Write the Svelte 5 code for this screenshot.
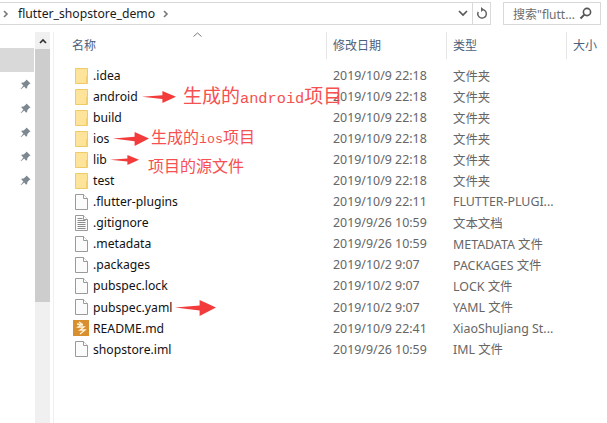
<script>
  const folder = 'folder';
  const rows = [
    { n: '.idea', d: '2019/10/9 22:18', t: '文件夹', i: 'folder' },
    { n: 'android', d: '2019/10/9 22:18', t: '文件夹', i: 'folder' },
    { n: 'build', d: '2019/10/9 22:18', t: '文件夹', i: 'folder' },
    { n: 'ios', d: '2019/10/9 22:18', t: '文件夹', i: 'folder' },
    { n: 'lib', d: '2019/10/9 22:18', t: '文件夹', i: 'folder' },
    { n: 'test', d: '2019/10/9 22:18', t: '文件夹', i: 'folder' },
    { n: '.flutter-plugins', d: '2019/10/9 22:11', t: 'FLUTTER-PLUGI...', i: 'file' },
    { n: '.gitignore', d: '2019/9/26 10:59', t: '文本文档', i: 'text' },
    { n: '.metadata', d: '2019/9/26 10:59', t: 'METADATA 文件', i: 'file' },
    { n: '.packages', d: '2019/10/2 9:07', t: 'PACKAGES 文件', i: 'file' },
    { n: 'pubspec.lock', d: '2019/10/2 9:07', t: 'LOCK 文件', i: 'file' },
    { n: 'pubspec.yaml', d: '2019/10/2 9:07', t: 'YAML 文件', i: 'file' },
    { n: 'README.md', d: '2019/10/9 22:41', t: 'XiaoShuJiang St...', i: 'md' },
    { n: 'shopstore.iml', d: '2019/9/26 10:59', t: 'IML 文件', i: 'file' }
  ];
  const pins = [0, 1, 2, 3, 4];
  const arrows = [
    { x: 142, y: 97, w: 34, h: 12 },
    { x: 113, y: 139, w: 36, h: 14 },
    { x: 110, y: 160, w: 29, h: 10 },
    { x: 175, y: 308, w: 41, h: 16 }
  ];
</script>

<div class="win">
  <div class="top">
    <div class="addr">
      <svg class="chev first" width="6" height="8" viewBox="0 0 6 8"><path d="M1 1l3 3-3 3" fill="none" stroke="#777" stroke-width="1.6"/></svg>
      <span class="crumb">flutter_shopstore_demo</span>
      <svg class="chev" width="6" height="8" viewBox="0 0 6 8"><path d="M1 1l3 3-3 3" fill="none" stroke="#777" stroke-width="1.6"/></svg>
      <span class="grow"></span>
      <svg class="drop" width="10" height="7" viewBox="0 0 10 7"><path d="M1 1l4 4 4-4" fill="none" stroke="#555" stroke-width="1.6"/></svg>
      <span class="refresh">
        <svg width="12" height="13" viewBox="0 0 12 13"><path d="M6 2.5a4.3 4.3 0 1 1-3.8 2.4" fill="none" stroke="#666" stroke-width="1.5"/><path d="M5 0v5l3-2.5z" fill="#666"/></svg>
      </span>
    </div>
    <div class="search">
      <span>搜索"flutt...</span>
      <svg width="13" height="13" viewBox="0 0 13 13"><circle cx="8" cy="5" r="3.6" fill="none" stroke="#555" stroke-width="1.6"/><path d="M5.4 7.6L1.5 11.5" stroke="#555" stroke-width="2"/></svg>
    </div>
  </div>

  <div class="main">
    <nav class="nav">
      <div class="sel"></div>
      {#each pins as p (p)}
        <div class="pin">
          <svg width="11" height="11" viewBox="0 0 11 11"><path d="M6.5.5l4 4-1.2.6-2 2.2-.2 2-1.2.2-1.7-2L1 10.300l-.4-.4 2.800-3.400-1.900-1.800.2-1.100 2-.2 2.200-2z" fill="#7c8791"/></svg>
        </div>
      {/each}
    </nav>
    <div class="scroll">
      <div class="sup"><svg width="8" height="6" viewBox="0 0 8 6"><path d="M1 5l3-3 3 3" fill="none" stroke="#333" stroke-width="1.700"/></svg></div>
      <div class="thumb"></div>
    </div>
    <div class="list">
      <div class="head">
        <svg class="sort" width="9" height="5" viewBox="0 0 9 5"><path d="M.5 4.500l4-3.500 4 3.500" fill="none" stroke="#777"/></svg>
        <span class="c1 h">名称</span>
        <span class="c2 h">修改日期</span>
        <span class="c3 h">类型</span>
        <span class="c4 h">大小</span>
      </div>
      <div class="rows">
        {#each rows as r (r.n)}
          <div class="row">
            <span class="c1 name">
              <span class="ico">
                {#if r.i === folder}
                  <svg width="14" height="16" viewBox="0 0 14 16"><path d="M.5.500h12v15H.500z" fill="#fde49a" stroke="#efcb67"/><path d="M11 8h2v7h-2z" fill="#f3cf6b"/></svg>
                {:else if r.i === 'file'}
                  <svg width="13" height="16" viewBox="0 0 13 16"><path d="M.5.500h8l4 4v11H.500z" fill="#fbfbfb" stroke="#9a9a9a"/><path d="M8.500.500v4h4" fill="#fff" stroke="#9a9a9a"/></svg>
                {:else if r.i === 'text'}
                  <svg width="13" height="16" viewBox="0 0 13 16"><path d="M.5.500h8l4 4v11H.500z" fill="#fbfbfb" stroke="#9a9a9a"/><path d="M8.500.500v4h4" fill="#fff" stroke="#9a9a9a"/><path d="M2.500 3.500h5M2.500 5.500h8M2.500 7.500h8M2.500 9.500h8M2.500 11.500h8M2.500 13.500h8" stroke="#8c8c8c"/></svg>
                {:else}
                  <svg class="md" width="16" height="16" viewBox="0 0 16 16"><rect width="16" height="16" fill="#d98f2e"/><path d="M6 2l3 2-4 3h6l-4 3h5l-5 4M4 4l6 1" fill="none" stroke="#fff3dc" stroke-width="1.300"/></svg>
                {/if}
              </span>{r.n}
            </span>
            <span class="c2 date">{r.d}</span>
            <span class="c3 date">{r.t}</span>
          </div>
        {/each}
      </div>
    </div>
  </div>

  {#each arrows as a (a.x)}
    <svg class="arrow" style="left:{a.x}px;top:{a.y - a.h / 2}px" width={a.w} height={a.h} viewBox="0 0 40 16" preserveAspectRatio="none">
      <path d="M0 7.500L24 5.500 24 0 40 7.500 24 16 24 10.500z" fill="#f33b3b"/>
    </svg>
  {/each}
  <span class="note n1">生成的<i>android</i>项目</span>
  <span class="note n2">生成的<i>ios</i>项目</span>
  <span class="note n3">项目的源文件</span>
</div>

<style>
  :global(body) { margin: 0; background: #fff; }
  .win {
    position: relative;
    width: 607px;
    height: 423px;
    overflow: hidden;
    background: #fff;
    font-family: "Noto Sans", "Noto Sans CJK SC", sans-serif;
    font-size: 12px;
    color: #1a1a1a;
  }
  .top { display: flex; height: 32px; padding-top: 2px; box-sizing: border-box; }
  .addr {
    display: flex;
    align-items: center;
    width: 491px;
    height: 23px;
    box-sizing: border-box;
    border: 1px solid #d9d9d9;
    border-left: 0;
  }
  .chev.first { margin-left: 3px; }
  .crumb { margin: 0 8px 0 9px; font-size: 12.200px; }
  .grow { flex: 1; }
  .drop { margin-right: 4px; }
  .refresh {
    display: flex;
    align-items: center;
    justify-content: center;
    width: 17px;
    height: 100%;
    border-left: 1px solid #d9d9d9;
  }
  .search {
    display: flex;
    align-items: center;
    justify-content: space-between;
    width: 98px;
    height: 23px;
    margin-left: 12px;
    padding: 0 8px 0 9px;
    box-sizing: border-box;
    border: 1px solid #d9d9d9;
    color: #6d6d6d;
  }
  .main { display: flex; height: 391px; }
  .nav { flex: none; width: 34px; padding-top: 16px; box-sizing: border-box; }
  .sel { height: 24px; background: #d9d9d9; }
  .pin { height: 24px; display: flex; align-items: center; justify-content: flex-end; padding-right: 3px; box-sizing: border-box; }
  .scroll { flex: none; width: 15px; margin-left: 1px; background: #f0f0f0; display: flex; flex-direction: column; height: 391px; }
  .sup { height: 17px; display: flex; align-items: center; justify-content: center; }
  .thumb { height: 253px; background: #cdcdcd; }
  .list { flex: 1; min-width: 0; margin-left: 3px; border-left: 1px solid #f0f0f0; }
  .head { display: flex; height: 27px; align-items: center; position: relative; }
  .sort { position: absolute; left: 139px; top: 0; }
  .rows { padding-top: 6px; }
  .row { display: flex; height: 21.050px; align-items: center; white-space: nowrap; }
  .c1, .c2, .c3, .c4 { flex: none; box-sizing: border-box; }
  .c1 { width: 272px; padding-left: 18px; }
  .c2 { width: 120px; padding-left: 7px; }
  .c3 { width: 120px; padding-left: 7px; }
  .c4 { width: 60px; padding-left: 7px; }
  .h { color: #4c607a; height: 27px; line-height: 27px; }
  .h.c2, .h.c3, .h.c4 { border-left: 1px solid #e5e5e5; padding-left: 6px; }
  .name { display: flex; align-items: center; padding-left: 21px; color: #111; font-size: 12.200px; }
  .ico { width: 18px; flex: none; display: flex; align-items: center; }
  .md { margin-left: -2px; }
  .date { color: #666; font-size: 12.400px; }
  .arrow { position: absolute; }
  .note {
    position: absolute;
    color: #f75050;
    white-space: nowrap;
    font-family: "Noto Sans CJK SC", sans-serif;
    line-height: 1;
  }
  .note i { font-style: normal; font-family: "Liberation Mono", monospace; }
  .n1 { left: 183px; top: 85px; font-size: 19px; }
  .n1 i { font-size: 15.300px; }
  .n2 { left: 151px; top: 128px; font-size: 16px; }
  .n2 i { font-size: 13.300px; }
  .n3 { left: 148px; top: 157px; font-size: 16px; }
</style>
